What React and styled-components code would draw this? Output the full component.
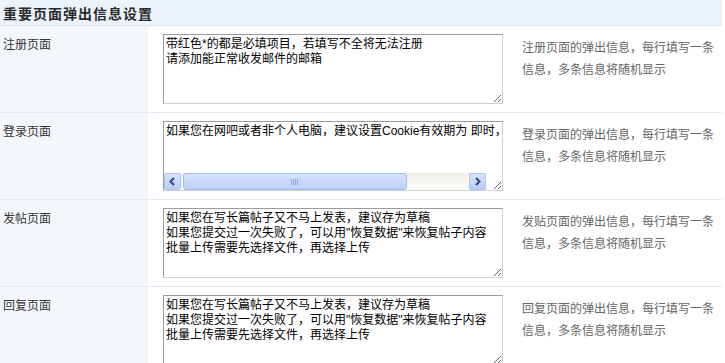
import React from 'react';
import styled, { createGlobalStyle } from 'styled-components';

const GlobalStyle = createGlobalStyle`
  html, body {
    margin: 0;
    padding: 0;
    overflow: hidden;
    background: #fff;
  }
  body {
    font-family: "Liberation Sans", "Noto Sans CJK SC", sans-serif;
    font-size: 12px;
    color: #333;
  }
`;

const Table = styled.div`
  width: 722px;
`;

const Header = styled.div`
  height: 25px;
  background: #eaf2fb;
  border-bottom: 1px solid #dfe8f2;
  padding-left: 3px;
  display: flex;
  align-items: center;
  font-size: 14px;
  font-weight: bold;
  letter-spacing: 1px;
  color: #2b2b2b;
`;

const Row = styled.div`
  display: grid;
  grid-template-columns: 148px 374px 1fr;
  border-bottom: 1px solid #e2eaf3;
`;

const Label = styled.div`
  background: #f3f7fc;
  padding: 8px 3px;
  line-height: 22px;
  color: #333;
`;

const InputCell = styled.div`
  padding: 8px 19px 8px 15px;
`;

const Hint = styled.div`
  padding: 11px 6px 8px 0;
  line-height: 22px;
  color: #666;
`;

const Field = styled.div`
  position: relative;
  width: 340px;
  height: 70px;
`;

const TextArea = styled.textarea`
  display: block;
  box-sizing: border-box;
  width: 340px;
  height: 70px;
  margin: 0;
  padding: 2px 2px;
  border: 1px solid;
  border-color: #9c9c9c #d0d0d0 #d0d0d0 #9c9c9c;
  font-family: "Liberation Sans", "Noto Sans CJK SC", sans-serif;
  font-size: 12px;
  line-height: 15px;
  color: #000;
  background: #fff;
  outline: none;
  white-space: ${(p) => (p.$nowrap ? 'pre' : 'pre-wrap')};
  overflow: hidden;
`;

/* XP style horizontal scrollbar laid over the bottom of the textarea */
const ScrollBar = styled.div`
  position: absolute;
  left: 1px;
  right: 17px;
  bottom: 1px;
  height: 17px;
  display: flex;
  background: linear-gradient(#f1efe6, #fdfdfa);
`;

const ArrowButton = styled.div`
  box-sizing: border-box;
  width: 17px;
  height: 17px;
  flex: none;
  border: 1px solid #b0c4f2;
  border-radius: 2px;
  background: linear-gradient(#d8e4fe, #b8cdf8);
  display: flex;
  align-items: center;
  justify-content: center;
`;

const Track = styled.div`
  flex: 1;
  padding: 0 62px 0 2px;
  display: flex;
`;

const Thumb = styled.div`
  flex: 1;
  box-sizing: border-box;
  border: 1px solid #a3baee;
  border-radius: 3px;
  background: linear-gradient(#d6e3fe, #bcd0f9);
  display: flex;
  align-items: center;
  justify-content: center;
`;

const Grip = styled.div`
  width: 8px;
  height: 6px;
  background: repeating-linear-gradient(90deg, #8fa7dc 0 1px, transparent 1px 2px);
`;

const Chevron = ({ dir }) => (
  <svg width="9" height="9" viewBox="0 0 9 9">
    <path
      d={dir === 'left' ? 'M6 1 L2.5 4.5 L6 8' : 'M3 1 L6.5 4.5 L3 8'}
      fill="none"
      stroke="#34497a"
      strokeWidth="2"
    />
  </svg>
);

const draftTips =
  '如果您在写长篇帖子又不马上发表，建议存为草稿\n如果您提交过一次失败了，可以用"恢复数据"来恢复帖子内容\n批量上传需要先选择文件，再选择上传';

const rows = [
  {
    label: '注册页面',
    value: '带红色*的都是必填项目，若填写不全将无法注册\n请添加能正常收发邮件的邮箱',
    hint: '注册页面的弹出信息，每行填写一条信息，多条信息将随机显示',
  },
  {
    label: '登录页面',
    value: '如果您在网吧或者非个人电脑，建议设置Cookie有效期为 即时，以保证账户安全',
    hint: '登录页面的弹出信息，每行填写一条信息，多条信息将随机显示',
    nowrap: true,
  },
  {
    label: '发帖页面',
    value: draftTips,
    hint: '发贴页面的弹出信息，每行填写一条信息，多条信息将随机显示',
  },
  {
    label: '回复页面',
    value: draftTips,
    hint: '回复页面的弹出信息，每行填写一条信息，多条信息将随机显示',
  },
];

export default function App() {
  return (
    <>
      <GlobalStyle />
      <Table>
        <Header>重要页面弹出信息设置</Header>
        {rows.map((row) => (
          <Row key={row.label}>
            <Label>{row.label}</Label>
            <InputCell>
              <Field>
                <TextArea
                  defaultValue={row.value}
                  $nowrap={row.nowrap}
                  wrap={row.nowrap ? 'off' : 'soft'}
                />
                {row.nowrap && (
                  <ScrollBar>
                    <ArrowButton>
                      <Chevron dir="left" />
                    </ArrowButton>
                    <Track>
                      <Thumb>
                        <Grip />
                      </Thumb>
                    </Track>
                    <ArrowButton>
                      <Chevron dir="right" />
                    </ArrowButton>
                  </ScrollBar>
                )}
              </Field>
            </InputCell>
            <Hint>{row.hint}</Hint>
          </Row>
        ))}
      </Table>
    </>
  );
}
